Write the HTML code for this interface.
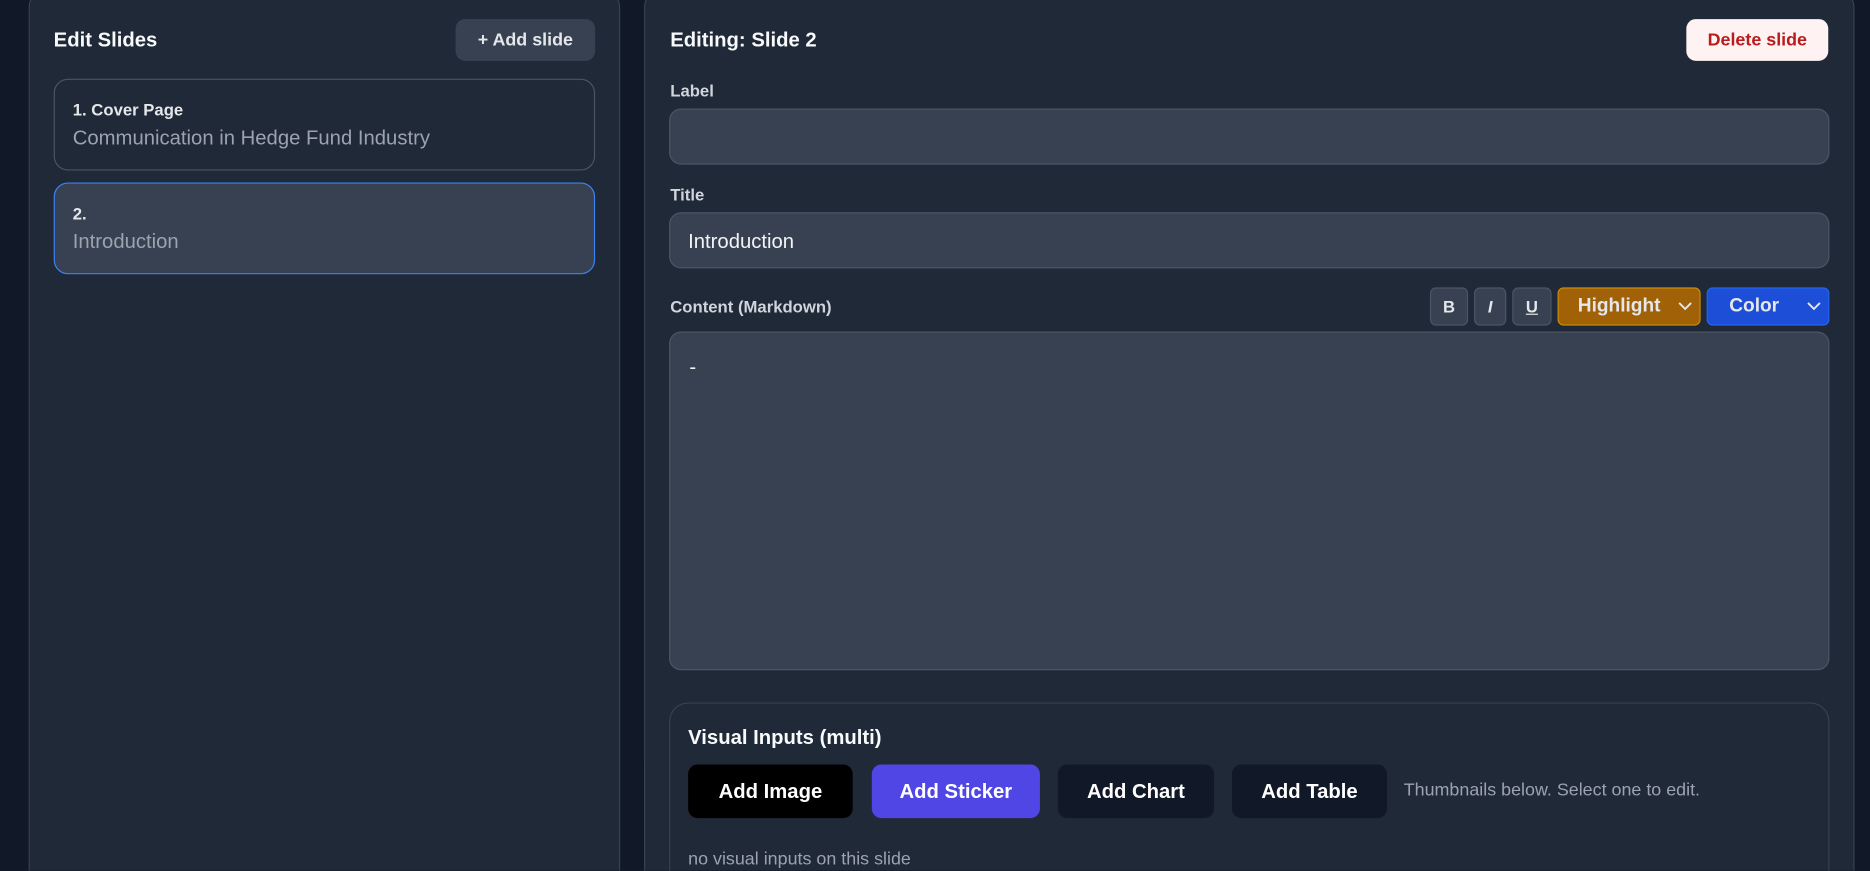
<!DOCTYPE html>
<html><head><meta charset="utf-8"><style>
html,body{margin:0;padding:0;background:#111827;width:1870px;height:871px;overflow:hidden;font-family:"Liberation Sans",sans-serif;}
#w{position:absolute;left:0;top:0;width:1568px;height:730px;overflow:hidden;transform:scale(1.19260);transform-origin:0 0;}
.a{position:absolute;box-sizing:border-box;}
.panel{background:#1f2937;border:1px solid #374151;border-radius:16px;}
.t{position:absolute;white-space:nowrap;}
.h{font-weight:bold;font-size:17px;color:#f9fafb;}
.lbl{font-weight:bold;font-size:14px;color:#d1d5db;}
.inp{background:#374151;border:1px solid #4b5563;border-radius:10px;}
.btn{display:flex;align-items:center;justify-content:center;color:#fff;font-weight:bold;font-size:17px;border-radius:8px;}
.tb{background:#374151;border:1px solid #4b5563;border-radius:5px;color:#e5e7eb;font-weight:bold;font-size:14px;display:flex;align-items:center;justify-content:center;}
.chev{position:absolute;right:6px;top:10px;}
</style></head><body><div id="w">
<div class="a panel" style="left:24px;top:-10px;width:496px;height:770px"></div>
<div class="t h" style="left:45px;top:24px">Edit Slides</div>
<div class="a btn" style="left:382px;top:16px;width:117px;height:35px;background:#374151;font-size:15px;color:#e5e7eb">+ Add slide</div>
<div class="a" style="left:45px;top:66px;width:454px;height:77px;border:1px solid #4b5563;border-radius:12px"></div>
<div class="t" style="left:61px;top:84px;font-weight:bold;font-size:14px;color:#e5e7eb">1. Cover Page</div>
<div class="t" style="left:61px;top:106px;font-size:17px;color:#9ca3af">Communication in Hedge Fund Industry</div>
<div class="a" style="left:45px;top:153px;width:454px;height:77px;background:#374151;border:1px solid #3b82f6;border-radius:12px"></div>
<div class="t" style="left:61px;top:171px;font-weight:bold;font-size:14px;color:#e5e7eb">2.</div>
<div class="t" style="left:61px;top:193px;font-size:17px;color:#9ca3af">Introduction</div>

<div class="a panel" style="left:540px;top:-10px;width:1015px;height:770px"></div>
<div class="t h" style="left:562px;top:24px">Editing: Slide 2</div>
<div class="a btn" style="left:1414px;top:16px;width:119px;height:35px;background:#fef2f2;color:#b91c1c;font-size:15px">Delete slide</div>
<div class="t lbl" style="left:562px;top:68px">Label</div>
<div class="a inp" style="left:561px;top:91px;width:973px;height:47px"></div>
<div class="t lbl" style="left:562px;top:155px">Title</div>
<div class="a inp" style="left:561px;top:178px;width:973px;height:47px"></div>
<div class="t" style="left:577px;top:193px;font-size:17px;color:#f3f4f6">Introduction</div>
<div class="t lbl" style="left:562px;top:249px">Content (Markdown)</div>
<div class="a tb" style="left:1199px;top:241px;width:32px;height:32px">B</div>
<div class="a tb" style="left:1236px;top:241px;width:27px;height:32px;font-style:italic">I</div>
<div class="a tb" style="left:1268px;top:241px;width:33px;height:32px;text-decoration:underline">U</div>
<div class="a tb" style="left:1306px;top:241px;width:120px;height:32px;background:#a16207;border-color:#ca8a04;font-size:16px;justify-content:flex-start;padding-left:16px">Highlight<svg class="chev" width="12" height="10" viewBox="0 0 12 10"><path d="M1 2l5 5 5-5" fill="none" stroke="#e5e7eb" stroke-width="1.6"/></svg></div>
<div class="a tb" style="left:1431px;top:241px;width:103px;height:32px;background:#1d4ed8;border-color:#2563eb;font-size:16px;justify-content:flex-start;padding-left:18px">Color<svg class="chev" width="12" height="10" viewBox="0 0 12 10"><path d="M1 2l5 5 5-5" fill="none" stroke="#e5e7eb" stroke-width="1.6"/></svg></div>
<div class="a inp" style="left:561px;top:278px;width:973px;height:284px"></div>
<div class="t" style="left:578px;top:298px;font-size:17px;color:#f3f4f6">-</div>
<div class="a" style="left:561px;top:589px;width:973px;height:200px;border:1px solid #374151;border-radius:16px"></div>
<div class="t h" style="left:577px;top:609px">Visual Inputs (multi)</div>
<div class="a btn" style="left:577px;top:641px;width:138px;height:45px;background:#000">Add Image</div>
<div class="a btn" style="left:731px;top:641px;width:141px;height:45px;background:#4f46e5">Add Sticker</div>
<div class="a btn" style="left:887px;top:641px;width:131px;height:45px;background:#111827">Add Chart</div>
<div class="a btn" style="left:1033px;top:641px;width:130px;height:45px;background:#111827">Add Table</div>
<div class="t" style="left:1177px;top:654px;font-size:15px;color:#9ca3af">Thumbnails below. Select one to edit.</div>
<div class="t" style="left:577px;top:712px;font-size:15px;color:#9ca3af">no visual inputs on this slide</div>
</div></body></html>
